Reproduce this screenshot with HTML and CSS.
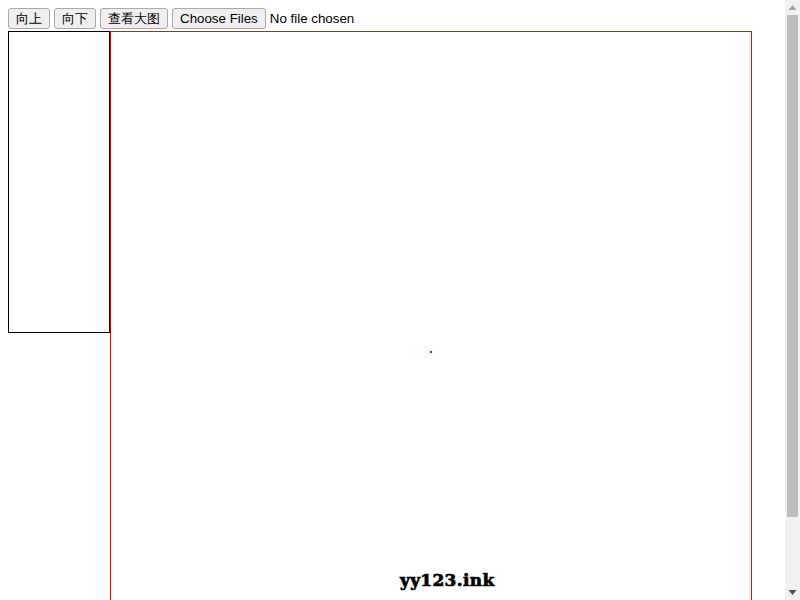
FILE: index.html
```html
<!DOCTYPE html>
<html lang="en">
<head>
    <meta charset="UTF-8">
    <title>yy123.ink</title>
    <link rel="stylesheet" href="styles.css">
</head>
<body>
    <div class="toolbar">
        <button>向上</button>
        <button>向下</button>
        <button>查看大图</button>
        <input type="file" multiple>
    </div>
    <div class="viewer">
        <div class="thumbs"></div>
        <div class="canvas">
            <div class="dot"></div>
            <div class="mark">yy123.ink</div>
        </div>
    </div>
    <div class="scrollbar">
        <svg class="arrow" width="15" height="15" viewBox="0 0 15 15"><path d="M3.5 10 L7.5 5 L11.5 10 Z" fill="#a3a3a3"/></svg>
        <div class="track"><div class="thumb"></div></div>
        <svg class="arrow" width="15" height="15" viewBox="0 0 15 15"><path d="M3.5 5 L11.5 5 L7.5 10 Z" fill="#505050"/></svg>
    </div>
</body>
</html>
```

FILE: styles.css
```css
.toolbar {
    height: 23px;
}
.toolbar button,
.toolbar input {
    font-family: "Liberation Sans", sans-serif;
    font-size: 13.33px;
    vertical-align: top;
    height: 21px;
}
.toolbar button,
.toolbar input::file-selector-button {
    height: 21px;
    padding: 1px 7px;
    box-sizing: border-box;
    background-color: #efefef;
    border: 1px solid #a9a9a9;
    border-radius: 3px;
}
/* Viewer */
.viewer {
    display: flex;
    align-items: flex-start;
}
.thumbs {
    width: 100px;
    height: 300px;
    border: 1px solid #000;
}
.canvas {
    position: relative;
    width: 640px;
    height: 640px;
    border: 1px solid #f00;
}
.dot {
    position: absolute;
    left: 319px;
    top: 319px;
    width: 2px;
    height: 2px;
    background-color: #f00;
}
.mark {
    position: absolute;
    left: 289px;
    top: 538px;
    font-family: "DejaVu Serif", serif;
    font-size: 17px;
    font-weight: bold;
    letter-spacing: 0.3px;
    color: #000;
    -webkit-text-stroke: 0.7px #000;
}
/* Scrollbar */
.scrollbar {
    position: fixed;
    top: 0;
    right: 0;
    bottom: 0;
    width: 15px;
    display: flex;
    flex-direction: column;
    background-color: #f1f1f1;
}
.arrow {
    display: block;
    flex-shrink: 0;
}
.track {
    flex: 1;
}
.thumb {
    height: 502px;
    margin: 0 2px;
    background-color: #bebebe;
}
```
